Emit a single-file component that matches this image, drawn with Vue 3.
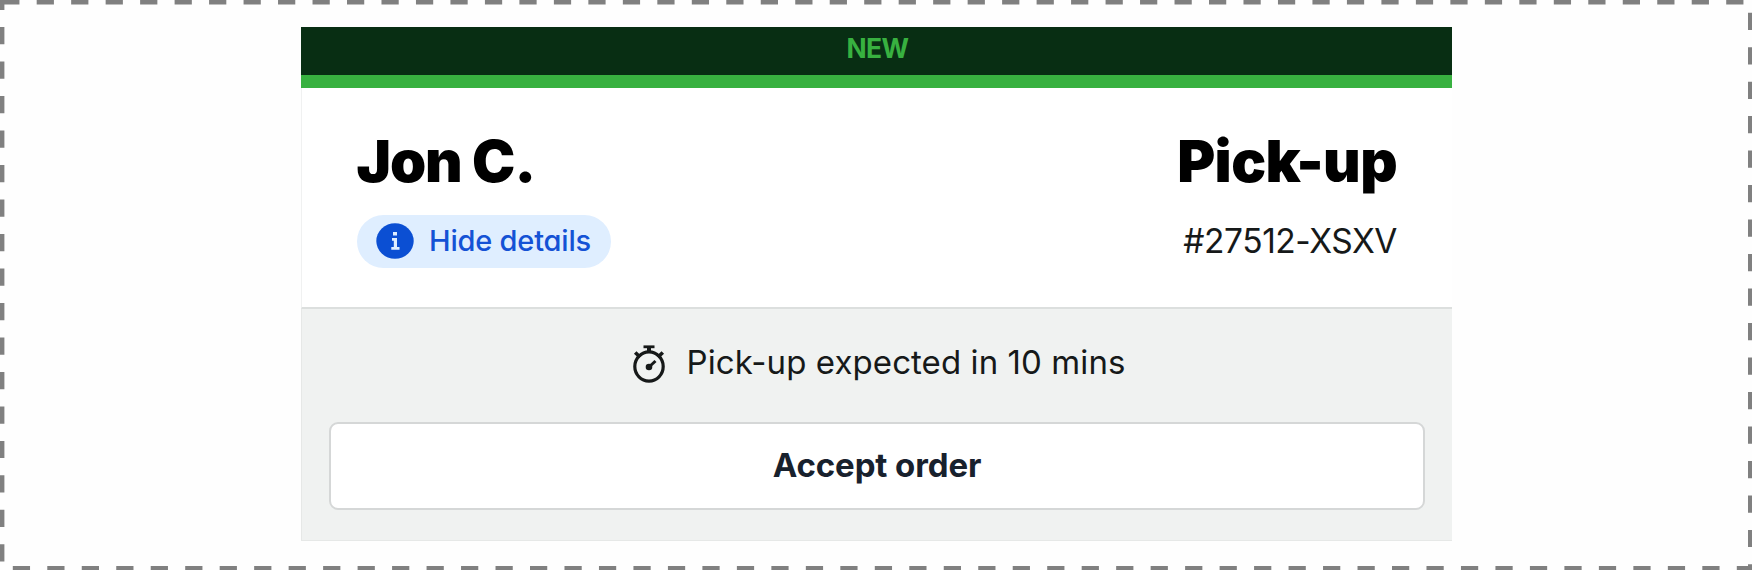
<template>
    <div class="frame">
        <svg class="frame-border" width="1752" height="570" viewBox="0 0 1752 570" aria-hidden="true">
            <rect x="2.2" y="2.2" width="1748" height="566" />
        </svg>

        <article class="card">
            <div class="status">{{ order.status }}</div>

            <header class="top">
                <div class="customer">
                    <h2 class="title name">{{ order.customer }}</h2>
                    <button class="details" @click="showDetails = !showDetails">
                        <svg class="info-icon" viewBox="0 0 38 36" aria-hidden="true">
                            <ellipse cx="19" cy="18" rx="18.7" ry="17.8" fill="#0b4fd3" />
                            <path d="M17 9h4v3.5h-4zM16 15h5v9h2.5v2.8H15.3V24h2.5v-6.2H16z" fill="#dfeeff" />
                        </svg>
                        <span class="details-text">{{ showDetails ? "Hide details" : "Show details" }}</span>
                    </button>
                </div>
                <div class="fulfilment">
                    <h2 class="title">{{ order.type }}</h2>
                    <p class="number">{{ order.number }}</p>
                </div>
            </header>

            <div class="bottom">
                <div class="expected">
                    <svg class="timer-icon" viewBox="0 0 32 38" fill="none" stroke="#161919" aria-hidden="true">
                        <ellipse cx="16" cy="21.5" rx="14.2" ry="14.6" stroke-width="3.2" />
                        <path d="M10.5 1.8h11" stroke-width="2.8" />
                        <path d="M16 1.8v5" stroke-width="4" />
                        <path d="M2.2 7.5l5 4.8M29.8 7.5l-5 4.8" stroke-width="3.6" />
                        <path d="M16 22l6.5-6" stroke-width="3" />
                        <circle cx="16" cy="22" r="3.3" fill="#161919" stroke="none" />
                    </svg>
                    <span class="expected-text">Pick-up expected in {{ order.minutes }} mins</span>
                </div>
                <button class="accept">Accept order</button>
            </div>
        </article>
    </div>
</template>

<script setup>
import { ref } from "vue";

const showDetails = ref(true);

const order = {
    status: "NEW",
    customer: "Jon C.",
    type: "Pick-up",
    number: "#27512-XSXV",
    minutes: 10,
};
</script>

<style>
body {
    margin: 0;
    background: #ffffff;
}
</style>

<style scoped>
.frame {
    position: relative;
    box-sizing: border-box;
    width: 1752px;
    height: 570px;
    padding: 27px 300px 29px 301px;
    overflow: hidden;
    background: #fefefe;
    font-family: Inter, "Liberation Sans", sans-serif;
}

.frame-border {
    position: absolute;
    top: 0;
    left: 0;
    pointer-events: none;
}

.frame-border rect {
    fill: none;
    stroke: #808080;
    stroke-width: 4.4;
    stroke-dasharray: 17.24 17.24;
}

.card {
    display: flex;
    flex-direction: column;
    height: 514px;
    background: #ffffff;
}

.status {
    box-sizing: border-box;
    height: 60.5px;
    padding-left: 2px;
    border-bottom: 13px solid #38b140;
    background: #082e13;
    color: #38b140;
    text-align: center;
    font-size: 26.5px;
    font-weight: 700;
    letter-spacing: -0.6px;
    line-height: 43px;
}

.top {
    display: flex;
    justify-content: space-between;
    box-sizing: border-box;
    height: 221.5px;
    padding: 38px 55px 0 54.5px;
    border-left: 1px solid #f0f1f1;
    border-bottom: 2px solid #dcdfde;
}

.title {
    margin: 0;
    font-size: 58px;
    font-weight: 900;
    letter-spacing: -0.6px;
    line-height: 70px;
    color: #000000;
}

.name {
    letter-spacing: -1.1px;
}

.details {
    display: flex;
    align-items: center;
    gap: 15px;
    width: 254.5px;
    height: 53.5px;
    margin-top: 19px;
    padding: 0 0 0 19.5px;
    border: none;
    border-radius: 27px;
    background: #dfeeff;
    color: #1452d5;
    font-family: inherit;
    font-size: 29px;
    font-weight: 500;
    letter-spacing: -0.2px;
    font-feature-settings: "cv11";
    cursor: pointer;
}

.details-text {
    padding-bottom: 1px;
}

.info-icon {
    flex: none;
    width: 38px;
    height: 36px;
}

.fulfilment {
    text-align: right;
}

.number {
    margin: 25px 0 0;
    font-size: 33.5px;
    letter-spacing: -0.45px;
    line-height: 40px;
    color: #161919;
}

.bottom {
    flex: 1;
    box-sizing: border-box;
    padding: 30px 27px 0;
    border-left: 1px solid #e6e8e7;
    border-bottom: 1px solid #e6e8e7;
    background: #f0f2f1;
}

.expected {
    display: flex;
    align-items: center;
    justify-content: center;
    gap: 22px;
    height: 50px;
    padding-left: 4px;
    font-size: 33px;
    letter-spacing: 0.08px;
    color: #161919;
}

.expected-text {
    padding-bottom: 4px;
}

.timer-icon {
    width: 32px;
    height: 38px;
}

.accept {
    display: block;
    width: 100%;
    height: 88px;
    margin-top: 32.5px;
    padding: 0 0 2px;
    border: 2px solid #d5d7d7;
    border-radius: 9px;
    background: #ffffff;
    color: #18212d;
    font-family: inherit;
    font-size: 33px;
    font-weight: 700;
    letter-spacing: -0.1px;
    cursor: pointer;
}
</style>
